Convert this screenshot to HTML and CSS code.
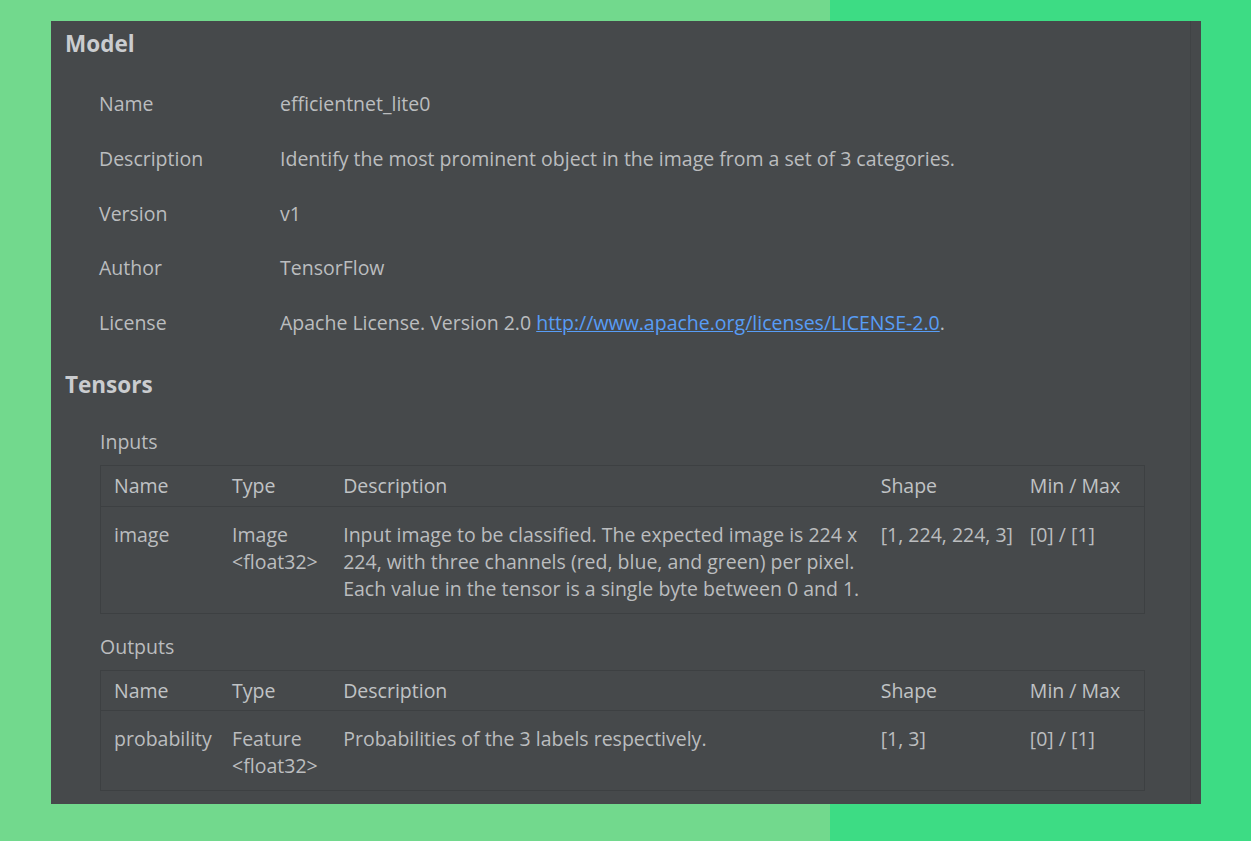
FILE: index.html
```html
<!DOCTYPE html>
<html>
<head>
<meta charset="utf-8">
<link rel="stylesheet" href="styles.css">
</head>
<body>
<div class="stage">
  <div class="panel">
    <h2 class="section">Model</h2>
    <dl class="props">
      <div class="prop"><dt>Name</dt><dd>efficientnet_lite0</dd></div>
      <div class="prop"><dt>Description</dt><dd>Identify the most prominent object in the image from a set of 3 categories.</dd></div>
      <div class="prop"><dt>Version</dt><dd>v1</dd></div>
      <div class="prop"><dt>Author</dt><dd>TensorFlow</dd></div>
      <div class="prop"><dt>License</dt><dd>Apache License. Version 2.0 <a href="#" class="link">http://www.apache.org/licenses/LICENSE-2.0</a>.</dd></div>
    </dl>
    <h2 class="section section-tensors">Tensors</h2>
    <div class="group">
      <div class="group-title">Inputs</div>
      <div class="tbl">
        <table>
          <colgroup><col class="c-name"><col class="c-type"><col class="c-desc"><col class="c-shape"><col class="c-minmax"></colgroup>
          <thead><tr><th>Name</th><th>Type</th><th>Description</th><th>Shape</th><th>Min / Max</th></tr></thead>
          <tbody><tr><td>image</td><td>Image<br>&lt;float32&gt;</td><td>Input image to be classified. The expected image is 224 x<br>224, with three channels (red, blue, and green) per pixel.<br>Each value in the tensor is a single byte between 0 and 1.</td><td>[1, 224, 224, 3]</td><td>[0] / [1]</td></tr></tbody>
        </table>
      </div>
    </div>
    <div class="group group-out">
      <div class="group-title">Outputs</div>
      <div class="tbl">
        <table>
          <colgroup><col class="c-name"><col class="c-type"><col class="c-desc"><col class="c-shape"><col class="c-minmax"></colgroup>
          <thead><tr><th>Name</th><th>Type</th><th>Description</th><th>Shape</th><th>Min / Max</th></tr></thead>
          <tbody><tr><td>probability</td><td>Feature<br>&lt;float32&gt;</td><td>Probabilities of the 3 labels respectively.</td><td>[1, 3]</td><td>[0] / [1]</td></tr></tbody>
        </table>
      </div>
    </div>
    <div class="scrollline"></div>
  </div>
</div>
</body>
</html>
```

FILE: styles.css
```css
html, body {
  margin: 0;
  padding: 0;
}
body {
  width: 1251px;
  height: 841px;
  overflow: hidden;
  background: linear-gradient(to right, #72d98d 0, #72d98d 830px, #3ddc84 830px, #3ddc84 100%);
  font-family: "Open Sans", "Noto Sans", sans-serif;
  color: #bbbdbf;
}
.stage {
  padding: 21px 0 0 51px;
}
.panel {
  position: relative;
  width: 1150px;
  height: 783px;
  box-sizing: border-box;
  background: #46494b;
  padding: 0 56px 0 14px;
  font-size: 19.5px;
  line-height: 27px;
}
.section {
  margin: 0;
  padding-top: 8px;
  font-size: 22.5px;
  line-height: 30px;
  font-weight: 700;
  color: #cacccf;
}
.section-tensors {
  padding-top: 20px;
}
.props {
  margin: 17px 0 0 0;
}
.prop {
  display: flex;
  height: 54.75px;
  align-items: center;
  margin-left: 34px;
}
.prop:first-child { height: 55px; }
.prop dt {
  width: 181px;
  flex: none;
}
.prop dd {
  margin: 0;
}
.link {
  color: #589df6;
  text-decoration: underline;
}
.group {
  margin-left: 35px;
}
.group-title {
  padding-top: 28px;
  line-height: 27px;
}
.group-out .group-title {
  padding-top: 19px;
}
.tbl {
  margin-top: 10px;
  border: 1px solid #3d4042;
}
table {
  width: 100%;
  table-layout: fixed;
  border-collapse: collapse;
}
.c-name { width: 118px; }
.c-type { width: 111px; }
.c-desc { width: 537px; }
.c-shape { width: 149px; }
.c-minmax { width: 127px; }
th, td {
  text-align: left;
  vertical-align: top;
  padding: 0 0 0 13px;
  font-weight: 400;
  white-space: nowrap;
}
th {
  height: 40px;
  box-sizing: border-box;
  padding-top: 6px;
  border-bottom: 1px solid #3d4042;
  color: #c0c3c5;
}
td {
  padding-top: 14px;
  padding-bottom: 11px;
}
.scrollline {
  position: absolute;
  top: 0;
  bottom: 0;
  right: 10px;
  width: 1px;
  background: #404345;
}
```
